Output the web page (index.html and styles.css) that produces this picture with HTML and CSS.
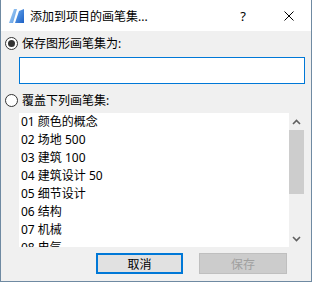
FILE: index.html
```html
<!DOCTYPE html>
<html lang="zh-CN">
<head>
    <meta charset="UTF-8">
    <title>添加到项目的画笔集...</title>
    <link rel="stylesheet" href="styles.css">
</head>
<body>
    <div class="dialog">
        <div class="titlebar">
            <svg class="app-icon" width="16" height="16" viewBox="0 0 16 16">
                <defs>
                    <linearGradient id="g1" x1="0" y1="0" x2="1" y2="1">
                        <stop offset="0" stop-color="#a8d0f4"/>
                        <stop offset="1" stop-color="#5a9ae4"/>
                    </linearGradient>
                    <linearGradient id="g2" x1="0" y1="0" x2="1" y2="1">
                        <stop offset="0" stop-color="#6aaaf0"/>
                        <stop offset="1" stop-color="#1c60c4"/>
                    </linearGradient>
                </defs>
                <polygon points="0,15 5,1 8,1 4,15" fill="url(#g1)"/>
                <polygon points="6,15 10,3 15,1 15,15" fill="url(#g2)"/>
            </svg>
            <span class="title">添加到项目的画笔集...</span>
            <span class="tb-btn">?</span>
            <span class="tb-btn close">
                <svg width="10" height="10" viewBox="0 0 10 10"><path d="M0.5 0.5 L9.5 9.5 M9.5 0.5 L0.5 9.5" stroke="#000" stroke-width="1"/></svg>
            </span>
        </div>

        <div class="content">
            <div class="radio-row">
                <span class="radio checked"></span>
                <span>保存图形画笔集为:</span>
            </div>
            <input type="text" class="name-input">

            <div class="radio-row second">
                <span class="radio"></span>
                <span>覆盖下列画笔集:</span>
            </div>

            <div class="list-box">
                <div class="list">
                    <div class="item">01 颜色的概念</div>
                    <div class="item">02 场地 500</div>
                    <div class="item">03 建筑 100</div>
                    <div class="item">04 建筑设计 50</div>
                    <div class="item">05 细节设计</div>
                    <div class="item">06 结构</div>
                    <div class="item">07 机械</div>
                    <div class="item">08 电气</div>
                </div>
                <div class="scrollbar">
                    <div class="arrow">
                        <svg width="9" height="6" viewBox="0 0 9 6"><path d="M1 5 L4.5 1.5 L8 5" fill="none" stroke="#606060" stroke-width="1.6"/></svg>
                    </div>
                    <div class="thumb"></div>
                    <div class="track"></div>
                    <div class="arrow">
                        <svg width="9" height="6" viewBox="0 0 9 6"><path d="M1 1 L4.5 4.5 L8 1" fill="none" stroke="#606060" stroke-width="1.6"/></svg>
                    </div>
                </div>
            </div>

            <div class="buttons">
                <button class="btn default">取消</button>
                <button class="btn" disabled>保存</button>
            </div>
        </div>
    </div>
</body>
</html>
```

FILE: styles.css
```css
body {
    margin: 0;
    font-family: "Noto Sans", "Noto Sans CJK SC", sans-serif;
    font-size: 12px;
    color: #000;
}
.dialog {
    width: 312px;
    height: 282px;
    box-sizing: border-box;
    border: 1px solid #6f8aa2;
    border-top: none;
    background: #f0f0f0;
    display: flex;
    flex-direction: column;
}
.titlebar {
    height: 31px;
    background: #fff;
    display: flex;
    align-items: center;
}
.app-icon {
    margin-left: 8px;
    margin-right: 5px;
    margin-top: 1px;
}
.title {
    flex: 1;
    font-size: 12px;
}
.tb-btn {
    width: 46px;
    height: 31px;
    display: flex;
    align-items: center;
    justify-content: center;
    font-family: "Noto Sans", sans-serif;
    font-size: 13px;
}
.close {
    width: 45px;
}
.content {
    padding: 4px 0 0 4px;
    display: flex;
    flex-direction: column;
}
.radio-row {
    height: 16px;
    display: flex;
    align-items: center;
    gap: 4px;
}
.radio-row.second {
    margin-top: 8px;
}
.radio {
    width: 13px;
    height: 13px;
    box-sizing: border-box;
    border: 1px solid #333;
    border-radius: 50%;
    background: #fff;
    position: relative;
}
.radio.checked::after {
    content: "";
    position: absolute;
    left: 2px;
    top: 2px;
    width: 7px;
    height: 7px;
    border-radius: 50%;
    background: #333;
}
.name-input {
    margin: 6px 0 0 14px;
    width: 286px;
    height: 27px;
    box-sizing: border-box;
    border: 1px solid #0078d7;
    background: #fff;
    outline: none;
}
.list-box {
    margin: 5px 0 0 14px;
    width: 285px;
    height: 134px;
    display: flex;
    background: #fff;
}
.list {
    flex: 1;
    overflow: hidden;
    padding-left: 2px;
}
.item {
    height: 18px;
    line-height: 18px;
    white-space: nowrap;
}
.scrollbar {
    width: 15px;
    background: #f0f0f0;
    display: flex;
    flex-direction: column;
}
.arrow {
    height: 17px;
    display: flex;
    align-items: center;
    justify-content: center;
}
.thumb {
    height: 64px;
    background: #cdcdcd;
}
.track {
    flex: 1;
}
.buttons {
    margin: 6px 0 0 91px;
    display: flex;
    gap: 16px;
}
.btn {
    width: 87px;
    height: 21px;
    box-sizing: border-box;
    font-family: inherit;
    font-size: 12px;
    background: #e1e1e1;
    border: 1px solid #adadad;
    padding: 0;
    color: #000;
}
.btn.default {
    border: 2px solid #0078d7;
}
.btn:disabled {
    width: 88px;
    background: #cccccc;
    border-color: #bfbfbf;
    color: #a0a0a0;
}
```
